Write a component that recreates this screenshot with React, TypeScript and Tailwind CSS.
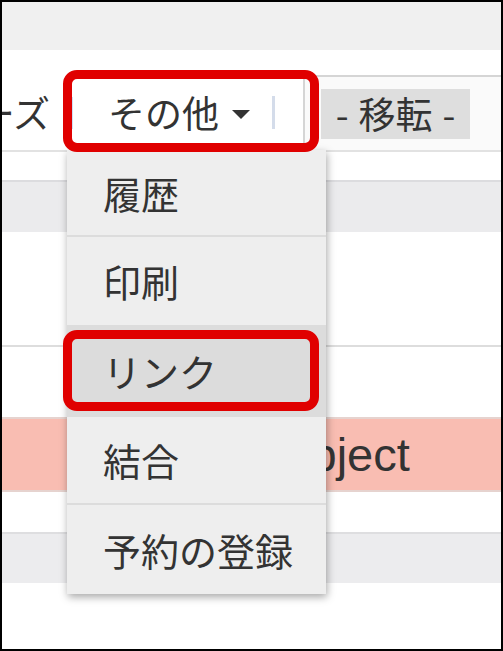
import React from "react";

const jp = "font-['Noto_Sans_CJK_JP','Noto_Sans',sans-serif]";

const items = [
  { label: "履歴", h: "h-[87px]", divider: true, active: false },
  { label: "印刷", h: "h-[88px]", divider: false, active: false },
  { label: "リンク", h: "h-[92px]", divider: false, active: true },
  { label: "結合", h: "h-[88px]", divider: true, active: false },
  { label: "予約の登録", h: "h-[89px]", divider: false, active: false },
];

export default function App() {
  return (
    <div className={`relative w-[503px] h-[651px] overflow-hidden border-2 border-black bg-white text-[#333] ${jp}`}>
      {/* page header strip */}
      <div className="h-[48px] bg-[#f0f0f0]" />
      <div className="h-[25px]" />

      {/* toolbar */}
      <div className="flex h-[75px] text-[37px] leading-none">
        <div className="w-[60px] flex items-center justify-end pr-[12px] overflow-hidden whitespace-nowrap">
          ーズ
        </div>
        <div className="w-[241px] flex items-center">
          <span className="ml-[9px] w-[2px] h-[32px] bg-[#cfe0f5]" />
          <span className="ml-[35px]">その他</span>
          <svg className="ml-[12px] mt-[4px]" width="20" height="11" viewBox="0 0 20 11">
            <path d="M1 1 L19 1 L10 10 Z" fill="#333" />
          </svg>
          <span className="ml-[21px] w-[3px] h-[33px] bg-[#d4dcea]" />
        </div>
        <div className="flex-1 flex items-center border-l-2 border-t-2 border-[#d5d5d5] bg-[#fafafa]">
          <div className="ml-[16px] w-[149px] h-[50px] bg-[#dedede] flex items-center justify-center gap-[10px]">
            <span>-</span>
            <span>移転</span>
            <span>-</span>
          </div>
        </div>
      </div>

      {/* table rows behind the menu */}
      <div className="h-[30px] border-t-2 border-[#e2e2e2]" />
      <div className="h-[52px] bg-[#ebebed] border-t-2 border-[#dcdcdf]" />
      <div className="h-[115px] border-b-2 border-[#dddddd]" />
      <div className="h-[70px]" />
      <div className="h-[75px] bg-[#f9bdb2] border-t-2 border-b-2 border-[#e6d3cf] flex items-center">
        <span className="ml-[251px] text-[47px] leading-none font-['Liberation_Sans',Arial,sans-serif] text-[#333]">
          Subject
        </span>
      </div>
      <div className="h-[40px]" />
      <div className="h-[51px] bg-[#ececee] border-t-2 border-[#dedee0]" />

      {/* dropdown menu */}
      <div className="absolute left-[65px] top-[148px] w-[259px] bg-[#eeeeee] shadow-[1px_3px_8px_rgba(0,0,0,0.35)]">
        {items.map((it) => (
          <div
            key={it.label}
            className={`${it.h} flex items-center pl-[36px] text-[38px] leading-none ${it.active ? "bg-[#dcdcdc]" : ""} ${it.divider ? "border-b-2 border-[#dcdcdc]" : ""}`}
          >
            {it.label}
          </div>
        ))}
      </div>

      {/* red callouts */}
      <div className="absolute left-[61px] top-[68px] w-[256px] h-[82px] rounded-[14px] border-[9px] border-[#e00000]" />
      <div className="absolute left-[61px] top-[328px] w-[256px] h-[81px] rounded-[14px] border-[9px] border-[#e00000]" />
    </div>
  );
}
